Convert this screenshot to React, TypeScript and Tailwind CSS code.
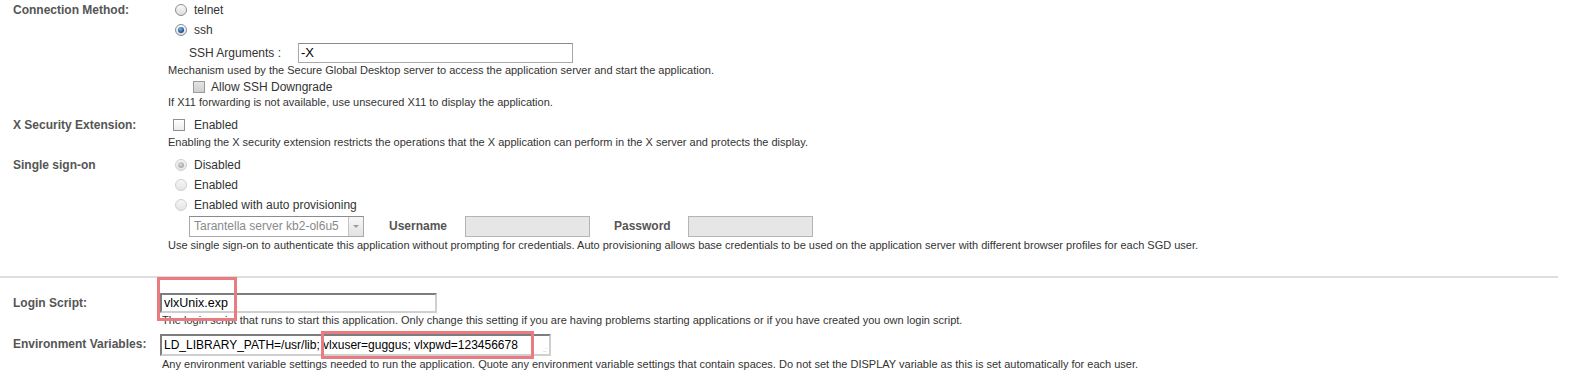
import React from "react";

const Radio = ({ checked = false, disabled = false }: { checked?: boolean; disabled?: boolean }) => {
  const ring = disabled ? "border-[#cfcfcf] bg-[linear-gradient(#f6f6f6,#e4e4e4)]" : "border-[#8e8e8e] bg-[linear-gradient(#fafafa,#dcdcdc)]";
  return (
    <span className={`relative inline-flex w-[12px] h-[12px] shrink-0 rounded-full border ${ring} items-center justify-center`}>
      {checked && !disabled && (
        <span className="w-[6px] h-[6px] rounded-full bg-[radial-gradient(circle_at_40%_35%,#7fb2e8,#1d5aa0_60%,#0d3566)]" />
      )}
      {checked && disabled && <span className="w-[6px] h-[6px] rounded-full bg-[radial-gradient(circle_at_40%_35%,#d8d8d8,#9a9a9a)]" />}
    </span>
  );
};

const Check = ({ dim = false }: { dim?: boolean }) => (
  <span
    className={`inline-block w-[12px] h-[12px] shrink-0 border ${
      dim ? "border-[#9a9a9a] bg-[linear-gradient(#e4e4e4,#cfcfcf)]" : "border-[#8f8f8f] bg-[linear-gradient(#ffffff,#ececec)]"
    }`}
  />
);

const Help = ({ children, h = "h-[15px]" }: { children: React.ReactNode; h?: string }) => (
  <div className={`${h} leading-[15px] text-[11px] text-[#333] whitespace-nowrap`}>{children}</div>
);

const Label = ({ children, h }: { children: React.ReactNode; h: string }) => (
  <div className={`w-[168px] shrink-0 pl-[13px] ${h} flex items-center text-[12px] font-bold text-[#555]`}>{children}</div>
);

const App = () => {
  return (
    <div className="w-[1572px] h-[381px] bg-white overflow-hidden font-['Liberation_Sans',Arial,sans-serif] text-[12px] text-[#333]">
      {/* Connection Method */}
      <div className="flex">
        <Label h="h-[19px]">Connection Method:</Label>
        <div className="flex flex-col">
          <div className="h-[19px] flex items-center pl-[7px] gap-[7px]">
            <Radio />
            <span>telnet</span>
          </div>
          <div className="h-[21px] flex items-center pl-[7px] gap-[7px]">
            <Radio checked />
            <span>ssh</span>
          </div>
          <div className="h-[23px] pt-[3px] flex items-start pl-[21px]">
            <span className="w-[109px] leading-[20px]">SSH Arguments :</span>
            <div className="w-[275px] h-[20px] border border-[#a8a8a8] border-t-[#8a8a8a] text-[13px] text-black leading-[18px] pl-[2px]">-X</div>
          </div>
          <Help>Mechanism used by the Secure Global Desktop server to access the application server and start the application.</Help>
          <div className="h-[17px] flex items-center pl-[25px] gap-[6px]">
            <Check dim />
            <span>Allow SSH Downgrade</span>
          </div>
          <Help>If X11 forwarding is not available, use unsecured X11 to display the application.</Help>
        </div>
      </div>

      {/* X Security Extension */}
      <div className="flex mt-[6px]">
        <Label h="h-[18px]">X Security Extension:</Label>
        <div className="flex flex-col">
          <div className="h-[18px] flex items-center pl-[5px] gap-[9px]">
            <Check />
            <span>Enabled</span>
          </div>
          <div className="mt-[1px]">
            <Help>Enabling the X security extension restricts the operations that the X application can perform in the X server and protects the display.</Help>
          </div>
        </div>
      </div>

      {/* Single sign-on */}
      <div className="flex mt-[5px]">
        <Label h="h-[19px]">Single sign-on</Label>
        <div className="flex flex-col">
          <div className="h-[19px] flex items-center pl-[7px] gap-[7px]">
            <Radio checked disabled />
            <span>Disabled</span>
          </div>
          <div className="h-[21px] flex items-center pl-[7px] gap-[7px]">
            <Radio disabled />
            <span>Enabled</span>
          </div>
          <div className="h-[20px] flex items-center pl-[7px] gap-[7px]">
            <Radio disabled />
            <span>Enabled with auto provisioning</span>
          </div>
          <div className="mt-[1px] h-[22px] flex items-start pl-[21px]">
            <div className="w-[175px] h-[21px] flex border border-[#a9a9a9] border-t-[#8c8c8c] bg-white">
              <span className="flex-1 pl-[4px] leading-[19px] text-[12px] text-[#8a8a8a] whitespace-nowrap overflow-hidden">Tarantella server kb2-ol6u5</span>
              <span className="w-[15px] h-[19px] border-l border-[#c4c4c4] bg-[linear-gradient(#f7f7f7,#e2e2e2)] flex items-center justify-center">
                <span className="w-0 h-0 border-l-[3px] border-r-[3px] border-t-[3px] border-l-transparent border-r-transparent border-t-[#9c9c9c]" />
              </span>
            </div>
            <span className="ml-[25px] w-[76px] leading-[21px] font-bold text-[#555]">Username</span>
            <div className="w-[125px] h-[21px] border border-[#b4b4b4] bg-[#e6e6e6]" />
            <span className="ml-[24px] w-[74px] leading-[21px] font-bold text-[#555]">Password</span>
            <div className="w-[125px] h-[21px] border border-[#b4b4b4] bg-[#e6e6e6]" />
          </div>
          <Help h="h-[13px]">
            Use single sign-on to authenticate this application without prompting for credentials. Auto provisioning allows base credentials to be used on the application server with different browser profiles for each SGD user.
          </Help>
        </div>
      </div>

      <div className="mt-[25px] w-[1558px] h-[2px] bg-[#dedede]" />

      {/* Login Script */}
      <div className="flex mt-[15px]">
        <Label h="h-[20px]">Login Script:</Label>
        <div className="flex flex-col -ml-[8px]">
          <div className="relative w-[277px] h-[20px] border-2 border-[#7d7d7d] border-r-[#cfcfcf] border-b-[#cfcfcf] text-[12.5px] text-black leading-[16px] pl-[2px]">
            vlxUnix.exp
            <span className="absolute left-[-5px] top-[-18px] w-[80px] h-[44px] border-[3px] border-[#e97c80]" />
          </div>
          <div className="pl-[2px]">
            <Help h="h-[14px]">The login script that runs to start this application. Only change this setting if you are having problems starting applications or if you have created you own login script.</Help>
          </div>
        </div>
      </div>

      {/* Environment Variables */}
      <div className="flex mt-[7px]">
        <Label h="h-[20px]">Environment Variables:</Label>
        <div className="flex flex-col -ml-[8px]">
          <div className="relative w-[391px] h-[22px] border-2 border-[#7d7d7d] border-r-[#cfcfcf] border-b-[#cfcfcf] text-[12px] text-black leading-[18px] pl-[2px] whitespace-nowrap">
            LD_LIBRARY_PATH=/usr/lib; vlxuser=guggus; vlxpwd=123456678
            <span className="absolute right-[2px] bottom-[1px] text-[7px] leading-[7px] text-[#aaa]">.:</span>
            <span className="absolute left-[159px] top-[-5px] w-[213px] h-[28px] border-[3px] border-[#e97c80]" />
          </div>
          <div className="pl-[2px] mt-[1px]">
            <Help h="h-[14px]">Any environment variable settings needed to run the application. Quote any environment variable settings that contain spaces. Do not set the DISPLAY variable as this is set automatically for each user.</Help>
          </div>
        </div>
      </div>
    </div>
  );
};

export default App;
